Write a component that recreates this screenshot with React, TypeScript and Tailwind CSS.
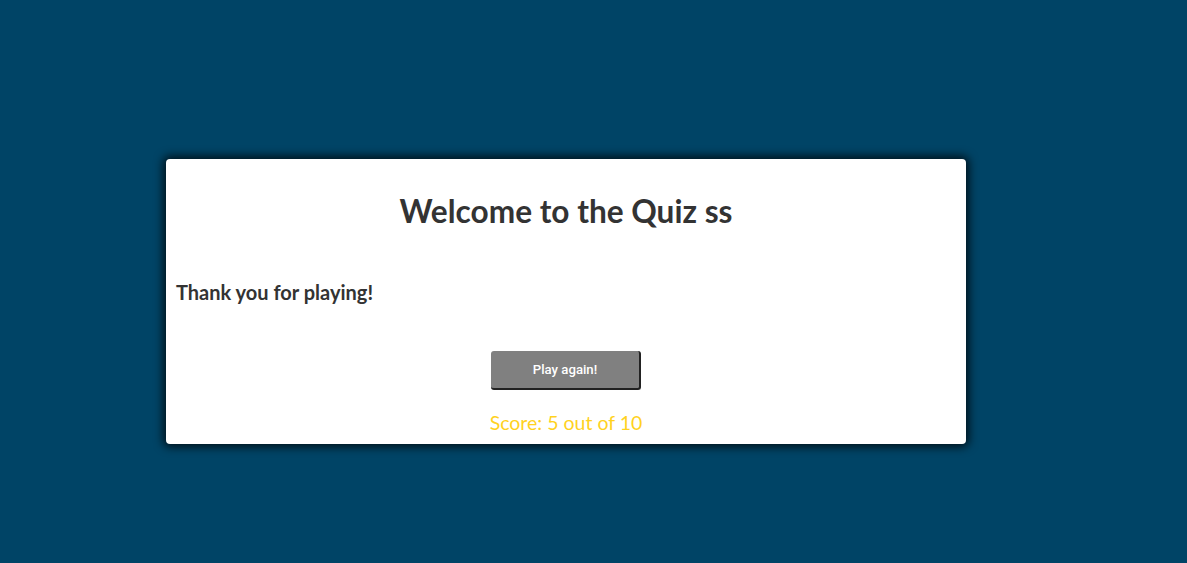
export default function App() {
  return (
    <div className="min-h-[563px] w-full bg-[#004466] pt-[159px]" style={{ fontFamily: "Lato, 'Noto Sans', sans-serif" }}>
      <div className="ml-[166px] w-[800px] h-[285px] bg-white rounded-[4px] shadow-[0_0_10px_3px_rgba(0,0,0,0.75)] px-[10px] pt-[32px]">
        <h1 className="text-center text-[31.6px] font-bold text-[#333] leading-[40px]">Welcome to the Quiz ss</h1>
        <p className="mt-[49px] text-[20px] font-bold text-[#333] leading-[24px]">Thank you for playing!</p>
        <div className="flex justify-center mt-[47px]">
          <button className="w-[150px] h-[39px] bg-[#808080] text-white text-[13.2px] font-medium rounded-[3px] border-r-2 border-b-2 border-[#222]" style={{ fontFamily: "Roboto, Arial, sans-serif" }}>Play again!</button>
        </div>
        <p className="text-center text-[19.5px] text-[#ffd21f] mt-[21px] leading-[24px]">Score: 5 out of 10</p>
      </div>
    </div>
  );
}
